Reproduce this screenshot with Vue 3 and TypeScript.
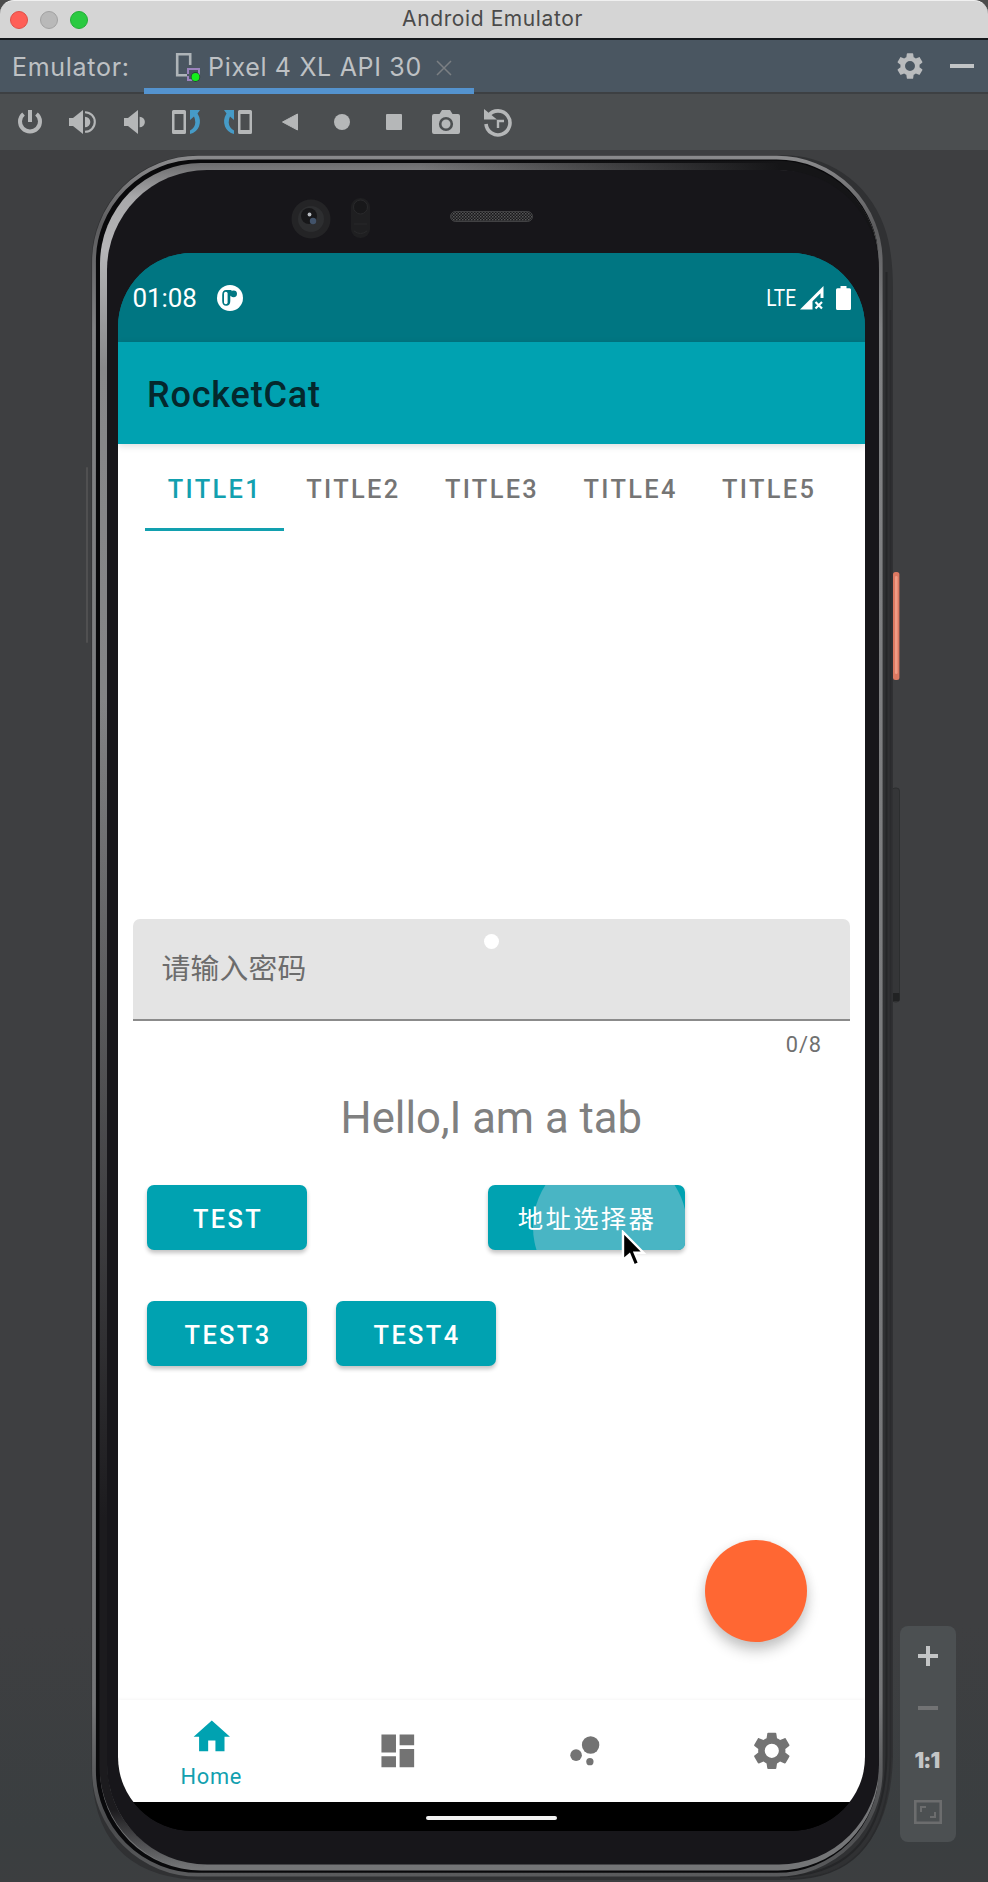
<script setup lang="ts">
import { ref } from 'vue'

const tabs = ['TITLE1', 'TITLE2', 'TITLE3', 'TITLE4', 'TITLE5']
const activeTab = ref(0)
const password = ref('')
const maxLength = 8

const gearPath =
  'M19.43 12.98c.04-.32.07-.64.07-.98s-.03-.66-.07-.98l2.11-1.65c.19-.15.24-.42.12-.64l-2-3.46c-.12-.22-.39-.3-.61-.22l-2.49 1c-.52-.4-1.08-.73-1.69-.98l-.38-2.65C14.46 2.18 14.25 2 14 2h-4c-.25 0-.46.18-.49.42l-.38 2.65c-.61.25-1.17.59-1.69.98l-2.49-1c-.23-.09-.49 0-.61.22l-2 3.46c-.13.22-.07.49.12.64l2.11 1.65c-.04.32-.07.65-.07.98s.03.66.07.98l-2.11 1.65c-.19.15-.24.42-.12.64l2 3.46c.12.22.39.3.61.22l2.49-1c.52.4 1.08.73 1.69.98l.38 2.65c.03.24.24.42.49.42h4c.25 0 .46-.18.49-.42l.38-2.65c.61-.25 1.17-.59 1.69-.98l2.49 1c.23.09.49 0 .61-.22l2-3.46c.12-.22.07-.49-.12-.64l-2.11-1.65zM12 15.9a3.9 3.9 0 1 1 0-7.8 3.9 3.9 0 0 1 0 7.8z'
</script>

<template>
  <div class="window">
    <header class="titlebar">
      <div class="lights">
        <i class="light close"></i>
        <i class="light min"></i>
        <i class="light max"></i>
      </div>
      <span class="window-title">Android Emulator</span>
    </header>

    <div class="toolwindow">
      <span class="tool-label">Emulator:</span>
      <div class="device-tab">
        <svg class="device-icon" viewBox="0 0 26 30">
          <path d="M12 23.200H2.200V2.200H15.200V13" fill="none" stroke="#aeb4b8" stroke-width="2.600" />
          <path d="M13 22V17H24V24M13 24V28H18" fill="none" stroke="#9b83bd" stroke-width="2" />
          <circle cx="20.500" cy="25" r="4.700" fill="#1f3a2a" />
          <circle cx="20.500" cy="25" r="4" fill="#14f01c" />
        </svg>
        <span class="device-name">Pixel 4 XL API 30</span>
        <svg class="tab-close" viewBox="0 0 16 16">
          <path d="M1 1L15 15M15 1L1 15" stroke="#7b7f83" stroke-width="1.500" />
        </svg>
      </div>
      <div class="tool-actions">
        <svg class="tool-gear" viewBox="1.800 1.800 20.400 20.400"><path :d="gearPath" fill="#b9bbbd" /></svg>
        <i class="hide-bar"></i>
      </div>
    </div>

    <div class="toolbar">
      <svg viewBox="-26 -26 52 52">
        <path d="M-6.500 -8A10 10 0 1 0 6.500 -8" fill="none" stroke="#b5b7b8" stroke-width="4" />
        <path d="M-2 -12H2V0H-2z" fill="#b5b7b8" />
      </svg>
      <svg viewBox="-26 -26 52 52">
        <path d="M-13 -4H-9L1 -12V12L-9 4H-13z" fill="#b5b7b8" />
        <path d="M3 -5.300A5.300 5.300 0 0 1 3 5.300z" fill="#b5b7b8" />
        <path d="M3 -9.800A9.800 9.800 0 0 1 3 9.800" fill="none" stroke="#b5b7b8" stroke-width="2.100" />
      </svg>
      <svg viewBox="-26 -26 52 52">
        <path d="M-10 -4H-6L4 -12V12L-6 4H-10z" fill="#b5b7b8" />
        <path d="M5.600 -5.300A5.300 5.300 0 0 1 5.600 5.300z" fill="#b5b7b8" />
      </svg>
      <svg viewBox="-26 -26 52 52">
        <path fill-rule="evenodd" d="M-12.500 -12H-1.500Q0 -12 0 -10.500V10.500Q0 12 -1.500 12H-12.500Q-14 12 -14 10.500V-10.500Q-14 -12 -12.500 -12zM-11.500 -8V8H-2.500V-8z" fill="#b5b7b8" />
        <path d="M4 -12H14L11.500 -8.500Q15.500 -2 13 4.500Q10.500 10.500 4 12V8.500Q9 6 9.300 0.500Q9.300 -3 8 -5.500L4 -2z" fill="#469bc7" />
      </svg>
      <svg viewBox="-26 -26 52 52">
        <g transform="scale(-1 1)">
          <path fill-rule="evenodd" d="M-12.500 -12H-1.500Q0 -12 0 -10.500V10.500Q0 12 -1.500 12H-12.500Q-14 12 -14 10.500V-10.500Q-14 -12 -12.500 -12zM-11.500 -8V8H-2.500V-8z" fill="#b5b7b8" />
          <path d="M4 -12H14L11.500 -8.500Q15.500 -2 13 4.500Q10.500 10.500 4 12V8.500Q9 6 9.300 0.500Q9.300 -3 8 -5.500L4 -2z" fill="#469bc7" />
        </g>
      </svg>
      <svg viewBox="-26 -26 52 52"><path d="M-7.500 0L7.500 -8V8z" fill="#b5b7b8" stroke="#b5b7b8" stroke-linejoin="round" /></svg>
      <svg viewBox="-26 -26 52 52"><circle r="8" fill="#b5b7b8" /></svg>
      <svg viewBox="-26 -26 52 52"><rect x="-8" y="-8" width="16" height="16" rx="1" fill="#b5b7b8" /></svg>
      <svg viewBox="-26 -26 52 52">
        <path d="M-12 -8H-6.500L-4 -12H4L6.500 -8H12Q14 -8 14 -6V10Q14 12 12 12H-12Q-14 12 -14 10V-6Q-14 -8 -12 -8z" fill="#b5b7b8" />
        <circle cy="2" r="5.800" fill="none" stroke="#4c4f51" stroke-width="2.600" />
      </svg>
      <svg viewBox="-26 -26 52 52">
        <path d="M-9.500 -6.500A12 12 0 1 1 -12 2" fill="none" stroke="#b5b7b8" stroke-width="3.600" />
        <path d="M-14 -13V-2.500H-1z" fill="#b5b7b8" />
        <path d="M0 6V-1H6" fill="none" stroke="#b5b7b8" stroke-width="2.400" />
      </svg>
    </div>

    <main class="stage">
      <svg class="chassis" viewBox="0 150 988 1732">
        <defs>
          <linearGradient id="rim" x1="0" y1="0" x2="0" y2="1">
            <stop offset="0" stop-color="#8a8a8c" />
            <stop offset="0.040" stop-color="#5c5c5e" />
            <stop offset="0.100" stop-color="#808183" />
            <stop offset="0.900" stop-color="#747577" />
            <stop offset="0.970" stop-color="#4a4b4d" />
            <stop offset="1" stop-color="#5a5b5d" />
          </linearGradient>
          <linearGradient id="band" x1="0" y1="0" x2="0" y2="1">
            <stop offset="0" stop-color="#6c6c6e" />
            <stop offset="0.020" stop-color="#a8a8aa" />
            <stop offset="0.050" stop-color="#b6b6b8" />
            <stop offset="0.120" stop-color="#88888a" />
            <stop offset="1" stop-color="#747577" />
          </linearGradient>
          <linearGradient id="leftFade" gradientUnits="userSpaceOnUse" x1="0" y1="700" x2="0" y2="1868">
            <stop offset="0" stop-color="#1c1b1e" stop-opacity="0" />
            <stop offset="0.700" stop-color="#1c1b1e" />
            <stop offset="0.950" stop-color="#1c1b1e" />
            <stop offset="1" stop-color="#1c1b1e" stop-opacity="0" />
          </linearGradient>
          <linearGradient id="topFade" gradientUnits="userSpaceOnUse" x1="420" y1="0" x2="780" y2="0">
            <stop offset="0" stop-color="#151517" stop-opacity="0" />
            <stop offset="1" stop-color="#151517" />
          </linearGradient>
          <pattern id="mesh" width="3" height="3" patternUnits="userSpaceOnUse">
            <rect width="3" height="3" fill="#18181a" />
            <rect width="1.500" height="1.500" fill="#585859" />
            <rect x="1.500" y="1.500" width="1.500" height="1.500" fill="#48484a" />
          </pattern>
        </defs>

        <rect x="86" y="467" width="2" height="176" rx="1" fill="#505051" />
        <rect x="892" y="788" width="7.500" height="214" rx="3" fill="#353638" stroke="#2a2b2c" stroke-width="0.800" />
        <rect x="892" y="993" width="7.500" height="8" rx="1" fill="#212223" />
        <rect x="893" y="572" width="6.400" height="108" rx="2.500" fill="#dc7962" />
        <rect x="895" y="576" width="2.600" height="98" rx="1.300" fill="#f09c86" />

        <path d="M91.500 261A105.500 105.500 0 0 1 197 155.500H778A106 106 0 0 1 884 226Q893 250 893 290V1756Q890 1880 780 1880H206Q91.500 1880 91.500 1764z" fill="#303133" />
        <path d="M886.500 272V1756Q884 1875 780 1876.500" fill="none" stroke="#252628" stroke-width="2" />
        <path d="M890.500 310V1756Q888 1878 790 1879" fill="none" stroke="#2a2b2d" stroke-width="1.500" />
        <rect x="94" y="157.700" width="786.700" height="1717" rx="104" fill="#09090b" stroke="url(#rim)" stroke-width="3.800" />
        <rect x="100" y="163" width="779" height="1707.500" rx="101" fill="url(#band)" />
        <path d="M103.500 700V1766A101 101 0 0 0 204.500 1867" fill="none" stroke="url(#leftFade)" stroke-width="8" />
        <path d="M400 165.500H777.500A98 98 0 0 1 874 263.500V400" fill="none" stroke="url(#topFade)" stroke-width="9.500" />
        <rect x="107" y="170" width="772" height="1694.500" rx="100" fill="#17161a" />

        <circle cx="311" cy="219" r="19.500" fill="#242426" />
        <circle cx="311" cy="219" r="13" fill="#2d2e30" />
        <circle cx="309" cy="216" r="8" fill="#171719" />
        <circle cx="313" cy="221" r="3.200" fill="#42536a" />
        <circle cx="309.500" cy="214.500" r="1.900" fill="#b7bbc0" />
        <rect x="351" y="198" width="19" height="40" rx="9" fill="#1f1f21" />
        <circle cx="360.500" cy="207" r="7" fill="#18181a" stroke="#29292b" />
        <path d="M354 224H367M354 231Q360.500 236 367 231" fill="none" stroke="#29292b" />
        <rect x="450.500" y="211.500" width="82" height="10" rx="5" fill="url(#mesh)" stroke="#414143" />
      </svg>

      <section class="screen">
        <div class="statusbar">
          <span class="clock">01:08</span>
          <svg class="notif" viewBox="0 0 26 26">
            <circle cx="13" cy="13" r="13" fill="#fff" />
            <path d="M13.300 11.500V16Q13.300 20.800 9.200 20.800Q5.200 20.800 5.200 16V10Q5.200 5 9.200 5H14.500V9.500z" fill="#007682" />
            <rect x="7" y="6.800" width="3.600" height="12.400" rx="1.800" fill="#fff" />
            <circle cx="16.600" cy="8.800" r="3.400" fill="#007682" />
          </svg>
          <span class="net">LTE</span>
          <svg class="signal" viewBox="0 0 24 24">
            <path d="M0 23.500L23.500 0V12H20.500V7.300L12.500 15.300V23.500z" fill="#fff" />
            <path d="M15.500 16L22 22.500M22 16L15.500 22.500" stroke="#fff" stroke-width="2.200" />
          </svg>
          <svg class="battery" viewBox="0 0 15 24">
            <path d="M4.500 0H10.500V2.300H13.500Q15 2.300 15 3.800V22.500Q15 24 13.500 24H1.500Q0 24 0 22.500V3.800Q0 2.300 1.500 2.300H4.500z" fill="#fff" />
          </svg>
        </div>

        <div class="appbar">RocketCat</div>

        <nav class="tabs">
          <button
            v-for="(tab, index) in tabs"
            :key="tab"
            class="tab"
            :class="{ active: index === activeTab }"
            @click="activeTab = index"
          >
            {{ tab }}
          </button>
        </nav>

        <div class="content">
          <div class="field">
            <input v-model="password" class="field-input" :maxlength="maxLength" placeholder="请输入密码" />
            <i class="pager-dot"></i>
          </div>
          <div class="counter">{{ password.length }}/{{ maxLength }}</div>
          <p class="hello">Hello,I am a tab</p>
          <div class="row first">
            <button class="btn">TEST</button>
            <button class="btn pressed">
              <i class="ripple"></i>
              <span class="btn-text">地址选择器</span>
            </button>
          </div>
          <div class="row second">
            <button class="btn">TEST3</button>
            <button class="btn">TEST4</button>
          </div>
          <button class="fab" aria-label="Add"></button>
          <svg class="pointer" viewBox="0 0 26 40">
            <path d="M2 2V30L8.500 24.500L13 35.500L18.200 33.200L13.700 22.700H22.500z" fill="#000" stroke="#fff" stroke-width="2.400" />
          </svg>
        </div>

        <nav class="bottomnav">
          <button class="item current">
            <svg viewBox="0 0 24 24"><path d="M10 20v-6h4v6h5v-8h3L12 3 2 12h3v8z" /></svg>
            <span>Home</span>
          </button>
          <button class="item">
            <svg viewBox="0 0 24 24"><path d="M3 13h8V3H3v10zm0 8h8v-6H3v6zm10 0h8V11h-8v10zm0-18v6h8V3h-8z" /></svg>
          </button>
          <button class="item">
            <svg viewBox="0 0 24 24">
              <circle cx="7.200" cy="14.400" r="3.200" />
              <circle cx="14.800" cy="18" r="2" />
              <circle cx="15.200" cy="8.800" r="4.800" />
            </svg>
          </button>
          <button class="item">
            <svg viewBox="0 0 24 24"><path :d="gearPath" /></svg>
          </button>
        </nav>

        <div class="gesture"><i></i></div>
      </section>

      <aside class="zoombar">
        <svg viewBox="0 0 28 24"><path d="M4 12H24M14 2V22" stroke="#c3c5c6" stroke-width="4" /></svg>
        <svg viewBox="0 0 28 24"><path d="M4 12H24" stroke="#727374" stroke-width="4" /></svg>
        <span class="ratio">1:1</span>
        <svg viewBox="0 0 28 24">
          <path d="M1.300 1.300H26.700V22.700H1.300z" fill="none" stroke="#6c6d6e" stroke-width="2.600" />
          <path d="M7 12V7H12M21 12V17H16" fill="none" stroke="#6c6d6e" stroke-width="2" />
        </svg>
      </aside>
    </main>
  </div>
</template>

<style>
body {
  margin: 0;
  background: #3e3f41;
}
</style>

<style scoped>
.window {
  width: 988px;
  height: 1882px;
  overflow: hidden;
  display: flex;
  flex-direction: column;
  background: #4c4c4c;
  font-family: Roboto, 'Noto Sans CJK SC', sans-serif;
}
button {
  border: 0;
  padding: 0;
  background: none;
  font-family: inherit;
}
svg {
  display: block;
  flex: none;
}
.titlebar {
  box-sizing: border-box;
  height: 40px;
  flex: none;
  display: grid;
  grid-template-columns: 200px 1fr 200px;
  align-items: center;
  background: #d5d5d5;
  border-top: 1px solid #f0f0f0;
  border-bottom: 2px solid #15191c;
  border-radius: 14px 14px 0 0;
}
.lights {
  display: flex;
  gap: 12px;
  padding-left: 10px;
}
.light {
  box-sizing: border-box;
  width: 18px;
  height: 18px;
  border-radius: 50%;
}
.close {
  background: #fe5f57;
  border: 1px solid #df4f47;
}
.min {
  background: #b9b9b9;
  border: 1px solid #a2a2a2;
}
.max {
  background: #2aca41;
  border: 1px solid #22ae36;
}
.window-title {
  padding: 0 3px 2px 0;
  text-align: center;
  font-family: Inter, sans-serif;
  font-size: 21px;
  letter-spacing: 0.600px;
  color: #4a4a4a;
}
.toolwindow {
  box-sizing: border-box;
  height: 54px;
  flex: none;
  display: flex;
  background: #4a5661;
  border-bottom: 2px solid #3d4043;
  font-family: Inter, sans-serif;
  font-size: 25px;
  line-height: 54px;
  color: #bec1c4;
}
.tool-label {
  box-sizing: border-box;
  width: 144px;
  padding-left: 12px;
  letter-spacing: 0.700px;
}
.device-tab {
  box-sizing: border-box;
  width: 330px;
  height: 54px;
  display: flex;
  align-items: center;
  padding-left: 31px;
  border-bottom: 6px solid #5493cf;
}
.device-icon {
  width: 26px;
  height: 30px;
  margin-top: 6px;
}
.device-name {
  width: 228px;
  margin-left: 7px;
  padding-top: 6px;
  letter-spacing: 0.680px;
  white-space: nowrap;
}
.tab-close {
  width: 16px;
  height: 16px;
  margin-top: 8px;
}
.tool-actions {
  flex: 1;
  display: flex;
  align-items: center;
  justify-content: flex-end;
  gap: 27px;
  padding-right: 14px;
}
.tool-gear {
  width: 26px;
  height: 26px;
}
.hide-bar {
  width: 24px;
  height: 4px;
  background: #c1c4c6;
}
.toolbar {
  height: 56px;
  flex: none;
  display: flex;
  align-items: center;
  padding-left: 4px;
  background: #4b4e50;
}
.toolbar svg {
  width: 52px;
  height: 52px;
}
.stage {
  position: relative;
  box-sizing: border-box;
  height: 1732px;
  flex: none;
  display: flex;
  align-items: flex-start;
  padding: 103px 32px 0 118px;
  background: linear-gradient(#3e3f41 85%, #3a3e40 97%, #3c3e40);
}
.chassis {
  position: absolute;
  inset: 0;
  width: 988px;
  height: 1732px;
}
.screen {
  position: relative;
  width: 747px;
  height: 1578px;
  flex: none;
  overflow: hidden;
  display: flex;
  flex-direction: column;
  border-radius: 74px;
  background: linear-gradient(#007682 50%, #000 50%);
}
.statusbar {
  box-sizing: border-box;
  height: 89px;
  flex: none;
  display: flex;
  align-items: center;
  padding: 1px 14px 0 14.500px;
  background: #007682;
  color: #fff;
}
.clock {
  width: 84px;
  font-size: 26px;
  letter-spacing: -0.100px;
}
.notif {
  width: 26px;
  height: 26px;
}
.net {
  margin-left: auto;
  font-size: 23px;
  transform: scaleX(0.83);
  transform-origin: right;
}
.signal {
  width: 24px;
  height: 24px;
  margin-left: 4px;
}
.battery {
  width: 15px;
  height: 24px;
  margin-left: 12px;
}
.appbar {
  position: relative;
  z-index: 1;
  height: 102px;
  flex: none;
  padding-left: 29px;
  background: #00a2b1;
  box-shadow: 0 2px 7px rgba(0, 0, 0, 0.14);
  font-size: 36px;
  font-weight: 500;
  line-height: 107px;
  letter-spacing: 0.820px;
  color: #04282d;
}
.tabs {
  height: 87px;
  flex: none;
  display: flex;
  padding: 0 27px;
  background: #fff;
}
.tab {
  box-sizing: border-box;
  flex: 1;
  padding-top: 6px;
  border-bottom: 3.500px solid transparent;
  font-size: 25.400px;
  font-weight: 500;
  letter-spacing: 2.320px;
  line-height: 78px;
  text-indent: 1px;
  color: #757575;
}
.tab.active {
  color: #12a0af;
  border-bottom-color: #12a0af;
}
.content {
  position: relative;
  flex: 1;
  padding: 388px 15px 0 14.500px;
  background: #fff;
}
.field {
  position: relative;
  height: 102px;
}
.field-input {
  box-sizing: border-box;
  width: 100%;
  height: 102px;
  padding: 0 29px 6px;
  border: 0;
  border-bottom: 2.500px solid #8b8b8b;
  border-radius: 7px 7px 0 0;
  outline: none;
  background: #e4e4e4;
  font-family: 'Noto Sans CJK SC', sans-serif;
  font-size: 28.800px;
  letter-spacing: 0.200px;
}
.field-input::placeholder {
  color: #6c6c6c;
  opacity: 1;
}
.pager-dot {
  position: absolute;
  left: 351.500px;
  top: 15px;
  width: 15px;
  height: 15px;
  border-radius: 50%;
  background: #fff;
}
.counter {
  height: 48px;
  padding-right: 28px;
  font-size: 21.800px;
  line-height: 47px;
  letter-spacing: 0.900px;
  text-align: right;
  color: #707070;
}
.hello {
  margin: 24px 0 0;
  height: 51px;
  font-size: 43.600px;
  line-height: 51px;
  text-align: center;
  color: #808080;
}
.row {
  display: flex;
  padding-left: 14.500px;
}
.row.first {
  gap: 181px;
  margin-top: 41px;
}
.row.second {
  gap: 29px;
  margin-top: 51px;
}
.btn {
  width: 160px;
  height: 65px;
  padding-top: 2px;
  border-radius: 7px;
  background: #00a2b1;
  box-shadow: 0 3px 4px rgba(0, 0, 0, 0.24);
  font-size: 25.400px;
  font-weight: 500;
  letter-spacing: 2.360px;
  text-indent: 2px;
  color: #fff;
}
.btn.pressed {
  position: relative;
  width: 197px;
  padding: 0 0 2px;
  overflow: hidden;
  font-weight: 400;
  letter-spacing: 2.260px;
  text-indent: 1px;
}
.ripple {
  position: absolute;
  left: 44.500px;
  top: -35px;
  width: 154px;
  height: 154px;
  border-radius: 50%;
  background: #49b5c4;
}
.btn-text {
  position: relative;
}
.fab {
  position: absolute;
  left: 587px;
  top: 1009px;
  width: 102px;
  height: 102px;
  border-radius: 50%;
  background: #ff6733;
  box-shadow: 0 9px 14px rgba(0, 0, 0, 0.2), 0 2px 12px rgba(0, 0, 0, 0.08);
}
.pointer {
  position: absolute;
  left: 502.500px;
  top: 699px;
  width: 26px;
  height: 40px;
}
.bottomnav {
  position: relative;
  height: 102px;
  flex: none;
  display: flex;
  background: #fff;
  box-shadow: 0 -1px 3px rgba(0, 0, 0, 0.04);
}
.item {
  flex: 1;
  display: flex;
  flex-direction: column;
  align-items: center;
  justify-content: center;
  fill: #737373;
}
.item svg {
  width: 43.600px;
  height: 43.600px;
}
.item.current {
  fill: #00a2b1;
  color: #12a0af;
  justify-content: flex-start;
  padding-top: 15px;
}
.item span {
  margin-top: 5px;
  font-size: 21.800px;
  line-height: 26px;
  letter-spacing: 0.730px;
}
.gesture {
  height: 29px;
  flex: none;
  display: flex;
  align-items: flex-start;
  justify-content: center;
  background: #000;
}
.gesture i {
  width: 131px;
  height: 4px;
  margin-top: 14px;
  border-radius: 2px;
  background: #f3f3f3;
}
.zoombar {
  position: relative;
  box-sizing: border-box;
  width: 56px;
  height: 216px;
  margin: 1373px 0 0 auto;
  padding: 18px 0;
  display: flex;
  flex-direction: column;
  align-items: center;
  justify-content: space-between;
  border-radius: 8px;
  background: #4c5052;
}
.zoombar svg {
  width: 28px;
  height: 24px;
}
.ratio {
  height: 24px;
  padding-right: 2px;
  font-family: Inter, sans-serif;
  font-size: 21.500px;
  font-weight: 900;
  line-height: 24px;
  letter-spacing: -0.800px;
  color: #c3c5c6;
}
</style>
